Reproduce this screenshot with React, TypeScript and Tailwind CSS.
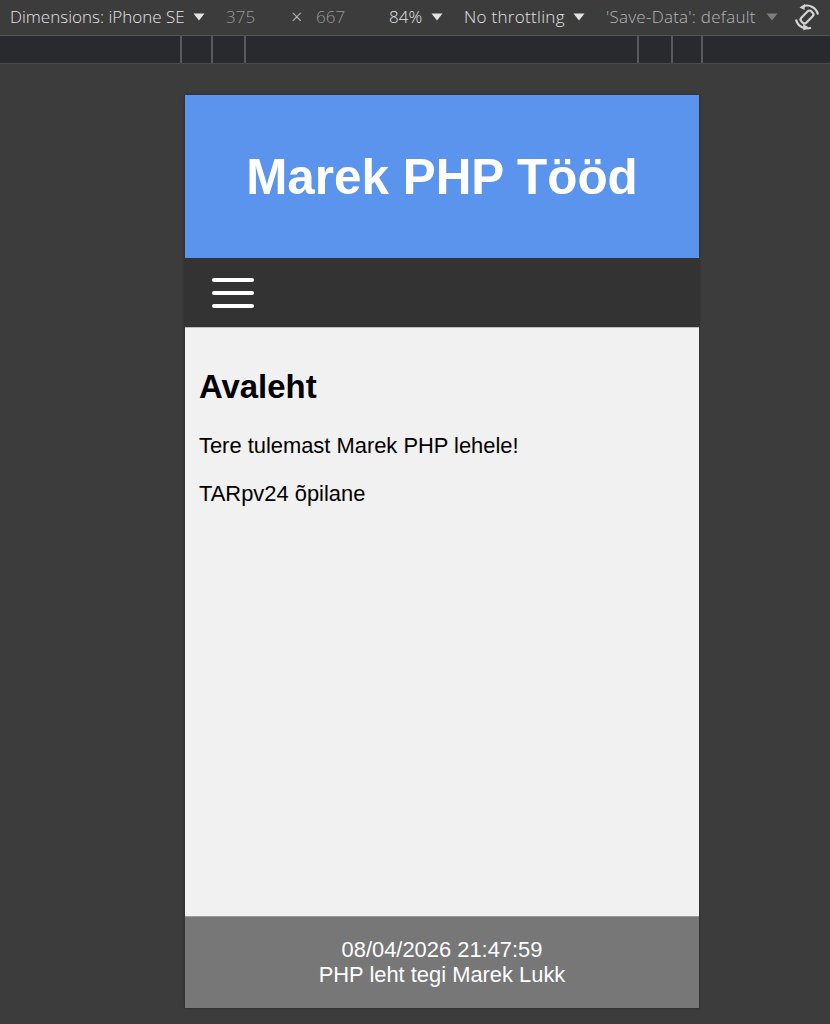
import React from 'react';

const Caret = ({ dim }: { dim?: boolean }) => (
  <svg width="12" height="8" viewBox="0 0 12 8" className="shrink-0">
    <path d="M0.5 0.5H11.5L6 7.5Z" fill={dim ? '#7d7d7d' : '#e3e3e3'} />
  </svg>
);

const RotateIcon = () => (
  <svg width="28" height="28" viewBox="0 0 28 28" fill="none" stroke="#d4d4d4" strokeWidth="2.2">
    <g transform="rotate(45 14 14)">
      <rect x="10.5" y="7" width="7" height="14" rx="2.5" />
    </g>
    <path d="M10 3.2A11.5 11.5 0 0 1 25 11.5" />
    <path d="M18 24.8A11.5 11.5 0 0 1 3 16.5" />
    <path d="M6.5 4.5L12 1L11.5 7Z" fill="#d4d4d4" stroke="none" />
    <path d="M10 21L16 24.5L10.5 27.5Z" fill="#d4d4d4" stroke="none" />
  </svg>
);

const Tick = () => <div className="w-[2px] h-[27px] bg-[#58595b]" />;

export default function App() {
  return (
    <div className="w-[830px] h-[1024px] overflow-hidden bg-[#3c3c3c] flex flex-col font-['Open_Sans',sans-serif]">
      {/* Device toolbar */}
      <div className="h-[36px] shrink-0 flex items-center border-b border-[#545454] text-[17px] font-light text-[#e3e3e3] pl-[10px] pb-[2px]">
        <span className="w-[176px] whitespace-nowrap">Dimensions: iPhone SE</span>
        <span className="ml-[7px]"><Caret /></span>
        <span className="ml-[21px] w-[30px] text-[#9a9a9a]">375</span>
        <span className="ml-[35px] w-[12px] text-[#c8c8c8] text-[20px]">×</span>
        <span className="ml-[13px] w-[30px] text-[#9a9a9a]">667</span>
        <span className="ml-[43px] w-[34px]">84%</span>
        <span className="ml-[8px]"><Caret /></span>
        <span className="ml-[21px] w-[101px] whitespace-nowrap tracking-[0.3px]">No throttling</span>
        <span className="ml-[8px]"><Caret /></span>
        <span className="ml-[21px] w-[152px] whitespace-nowrap text-[#b5b5b5] tracking-[0.25px]">'Save-Data': default</span>
        <span className="ml-[8px]"><Caret dim /></span>
        <span className="ml-[15px]"><RotateIcon /></span>
      </div>

      {/* Ruler */}
      <div className="h-[28px] shrink-0 bg-[#292a2d] border-b border-[#4a4a4a] flex items-start">
        <div className="ml-[180px] flex">
          <Tick />
          <div className="w-[29px]" />
          <Tick />
          <div className="w-[31px]" />
          <Tick />
          <div className="w-[391px]" />
          <Tick />
          <div className="w-[32px]" />
          <Tick />
          <div className="w-[28px]" />
          <Tick />
        </div>
      </div>

      {/* Emulated phone */}
      <div className="mt-[31px] ml-[185px] w-[514px] h-[913px] flex flex-col font-['Liberation_Sans',sans-serif] shadow-[0_0_2px_#222]">
        <header className="h-[163px] shrink-0 bg-[#5a94ec] flex items-center justify-center">
          <h1 className="text-[49.4px] font-bold text-white leading-none">Marek PHP Tööd</h1>
        </header>
        <nav className="h-[69px] shrink-0 bg-[#333333] flex items-center pl-[27px]">
          <div className="w-[42px] flex flex-col gap-[9px]">
            <div className="h-[4px] bg-white rounded-[2px]" />
            <div className="h-[4px] bg-white rounded-[2px]" />
            <div className="h-[4px] bg-white rounded-[2px]" />
          </div>
        </nav>
        <main className="flex-1 bg-[#f1f1f1] border-t border-[#bdbdbd] px-[14px] pt-[41px] text-black">
          <h2 className="text-[32.9px] font-bold leading-[36px]">Avaleht</h2>
          <p className="text-[21.9px] leading-[25px] mt-[28px]">Tere tulemast Marek PHP lehele!</p>
          <p className="text-[21.9px] leading-[25px] mt-[23px]">TARpv24 õpilane</p>
        </main>
        <footer className="h-[92px] shrink-0 bg-[#777777] border-t border-[#9a9a9a] text-white text-[21.9px] leading-[25px] text-center pt-[20px]">
          <div>08/04/2026 21:47:59</div>
          <div>PHP leht tegi Marek Lukk</div>
        </footer>
      </div>
    </div>
  );
}
